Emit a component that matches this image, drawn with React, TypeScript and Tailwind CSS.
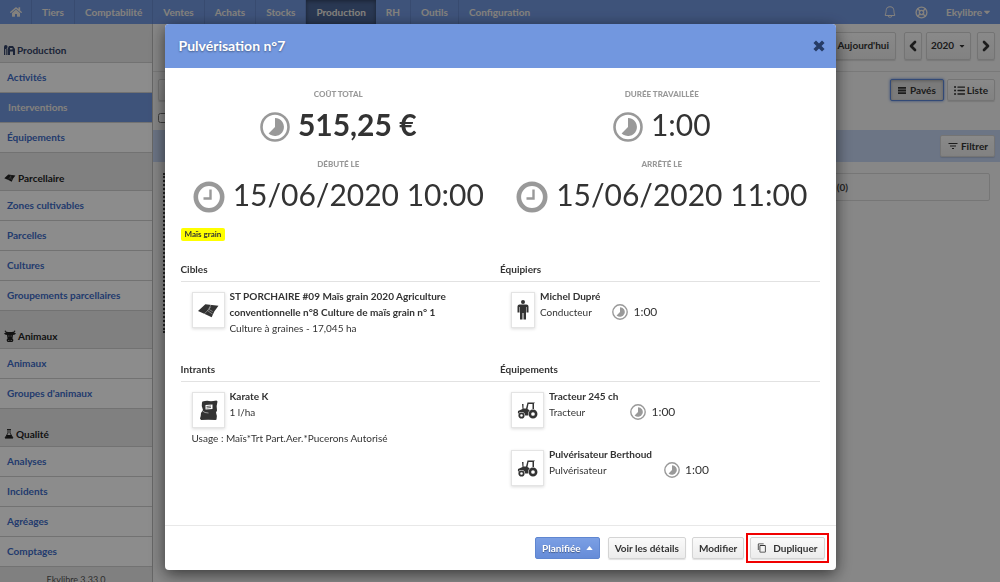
import React from 'react'
import { FaHome, FaListUl, FaCaretDown } from 'react-icons/fa'
import { MdFilterList, MdContentCopy } from 'react-icons/md'
import { PiBell } from 'react-icons/pi'
import { ChevronLeft, ChevronRight, LifeBuoy } from 'lucide-react'

const navItems = ['Tiers', 'Comptabilité', 'Ventes', 'Achats', 'Stocks', 'Production', 'RH', 'Outils', 'Configuration']

const BarnIcon = () => (
  <svg viewBox="0 0 22 20" className="h-[10px] w-[11px]" fill="currentColor" aria-hidden="true">
    <path d="M0 20V4q0-4 3.500-4T7 3v2L5.500 6.500V20H4V8H2.500v12zM7 20V8l3-6h8l4 6v12h-4v-7h-6v7zM12 6v3h5V6z" fillRule="evenodd" />
  </svg>
)

const FieldIcon = ({ className }: { className: string }) => (
  <svg viewBox="0 0 40 28" className={className} aria-hidden="true">
    <path d="M14 2l25 3-8 11-5 11-10-5L0 15z" fill="currentColor" />
    <path d="M25 2.500l-6 11-7 7M18 14l10 7M24 7l-3 5 7 4" fill="none" stroke="white" strokeOpacity=".6" strokeWidth="1.200" />
  </svg>
)

const CowIcon = () => (
  <svg viewBox="0 0 24 24" className="h-3 w-3" fill="currentColor" aria-hidden="true">
    <path d="M2 0Q0 4 4 6L0 6q1 4 6 4l1 7-2 3 2 4h10l2-4-2-3 1-7q5 0 6-4l-4 0q4-2 2-6-1 4-6 4H8Q3 4 2 0z" />
    <path d="M9 11h1.500v2H9zM13.500 11H15v2h-1.500zM8.500 20h2v1.500h-2zM13.500 20h2v1.500h-2z" fill="#e9e9e9" />
  </svg>
)

const FlaskIcon = () => (
  <svg viewBox="0 0 20 20" className="size-[10px]" aria-hidden="true">
    <path d="M6 1h8M8 1v7L2 18h16L12 8V1" fill="none" stroke="currentColor" strokeWidth="1.800" />
    <path d="M6 12h8l4 6.500H2z" fill="currentColor" />
  </svg>
)

const PersonIcon = () => (
  <svg viewBox="0 0 24 40" className="h-5 w-3" fill="currentColor" aria-hidden="true">
    <circle cx="12" cy="4" r="4" />
    <path d="M5 9h14q4 0 4 4v12h-4V14h-1v25h-5V26h-2v13H6V14H5v11H1V13q0-4 4-4z" />
  </svg>
)

const TractorIcon = () => (
  <svg viewBox="0 0 42 34" className="h-[17px] w-[21px]" aria-hidden="true">
    <path d="M10 4h3v9h5l3-12h15l-2 2v12l5 6-4 3-14 3H3q-2-4-1-9l9-4zM23 4l-2 10 5 3 5-3V4z" fill="currentColor" fillRule="evenodd" />
    <circle cx="32" cy="24" r="9.800" fill="white" />
    <circle cx="32" cy="24" r="6.300" fill="none" stroke="currentColor" strokeWidth="5.200" />
    <circle cx="9" cy="27" r="7.200" fill="white" />
    <circle cx="9" cy="27" r="4.400" fill="none" stroke="currentColor" strokeWidth="3.600" />
  </svg>
)

const BagIcon = () => (
  <svg viewBox="0 0 38 42" className="h-[21px] w-[21px]" aria-hidden="true">
    <path d="M7 3q8-2 13-1t15-1l2 2q-3 9-1 18l-2 4q3 7 1 14l-2 1q-15-1-29 0l-2-3q2-6 2-11l4-6Q4 12 6 5z" fill="currentColor" />
    <path d="M13 10l14-1v9l-14 1z" fill="white" />
    <path d="M15 13l9-1M15 16l9-1" fill="none" stroke="currentColor" strokeWidth="1.500" />
    <path d="M7 22q4 4 12 4" fill="none" stroke="white" strokeWidth="1" />
  </svg>
)

const TimelapseIcon = ({ className }: { className: string }) => (
  <svg viewBox="0 0 30 30" className={className} aria-hidden="true">
    <circle cx="15" cy="15" r="13.500" fill="none" stroke="#999" strokeWidth="2.600" />
    <path d="M15 6a9 9 0 1 1-6.400 15.400L15 15z" fill="#999" />
  </svg>
)

const ClockIcon = () => (
  <svg viewBox="0 0 32 32" className="mt-[6px] size-8 shrink-0" fill="none" stroke="#999" aria-hidden="true">
    <circle cx="16" cy="16" r="13.200" strokeWidth="4.600" />
    <path d="M17.500 8.500v9h-7" strokeWidth="2.400" />
  </svg>
)

const sections = [
  { title: 'Production', icon: <BarnIcon />, items: ['Activités', 'Interventions', 'Équipements'] },
  {
    title: 'Parcellaire',
    icon: <FieldIcon className="h-2 w-3" />,
    items: ['Zones cultivables', 'Parcelles', 'Cultures', 'Groupements parcellaires'],
  },
  { title: 'Animaux', icon: <CowIcon />, items: ['Animaux', "Groupes d'animaux"] },
  { title: 'Qualité', icon: <FlaskIcon />, items: ['Analyses', 'Incidents', 'Agréages', 'Comptages'] },
]

const buttonBase =
  'flex items-center justify-center rounded-xs border border-[#d4d4d4] bg-linear-to-b from-[#fafafa] to-[#ececec] font-bold text-[#333] shadow-[0_1px_1px_rgba(0,0,0,0.12)]'

function TopNav() {
  return (
    <header className="flex h-6 bg-[#7297df] text-[10px] font-bold text-[#f0ece4]">
      <nav className="flex">
        <a href="#" aria-label="Accueil" className="flex w-8 items-center justify-center border-r border-[#6689cd]">
          <FaHome className="size-3" />
        </a>
        {navItems.map(item => (
          <a
            key={item}
            href="#"
            className={
              item === 'Production'
                ? 'flex items-center bg-[#4c6697] px-[10px] shadow-[inset_0_1px_4px_rgba(0,0,0,0.4)]'
                : 'flex items-center border-r border-[#6689cd] px-[10px] last:border-r-0'
            }
          >
            {item}
          </a>
        ))}
      </nav>
      <div className="ml-auto flex items-center pr-2">
        <button aria-label="Notifications" className="mr-[18px]">
          <PiBell className="size-[14px]" />
        </button>
        <button aria-label="Aide" className="mr-[18px]">
          <LifeBuoy className="size-[13px]" strokeWidth={2.5} />
        </button>
        <button className="flex items-center">
          Ekylibre
          <FaCaretDown className="size-[10px]" />
        </button>
      </div>
    </header>
  )
}

function Sidebar() {
  return (
    <aside className="w-[153px] shrink-0 border-r border-[#bbb] bg-[#e9e9e9] text-[10px] font-bold">
      {sections.map(section => (
        <section key={section.title} className="border-t border-[#d0d0d0] first:border-t-0">
          <h2
            className={
              section.title === 'Production'
                ? 'flex h-[39px] items-end gap-[2px] border-b border-[#d0d0d0] pb-1 pl-1 leading-4 text-[#334266]'
                : 'flex h-[38px] items-end gap-[2px] border-b border-[#d0d0d0] pb-1 pl-1 leading-4 text-[#222]'
            }
          >
            <span className="flex h-4 items-center">{section.icon}</span>
            {section.title}
          </h2>
          <ul>
            {section.items.map(item => (
              <li key={item} className="border-b border-[#d0d0d0] last:border-b-0">
                <a
                  href="#"
                  className={
                    item === 'Interventions'
                      ? 'flex h-[29px] items-center bg-[#7297df] pl-2 text-[#f0ece4]'
                      : 'flex h-[29px] items-center bg-white pl-[7px] text-[#3e6cc8]'
                  }
                >
                  {item}
                </a>
              </li>
            ))}
          </ul>
        </section>
      ))}
      <footer className="border-t border-[#d0d0d0] pt-[6px] text-center text-[9px] font-normal text-[#555]">Ekylibre 3.33.0</footer>
    </aside>
  )
}

function MainPage() {
  return (
    <main className="min-w-0 flex-1 bg-[#f6f6f6] text-[10px]">
      <div className="flex h-12 items-center justify-end border-b border-[#ddd] pr-[5px] pb-1">
        <button className={`${buttonBase} mr-2 h-7 px-[6px]`}>Aujourd'hui</button>
        <button aria-label="Précédent" className={`${buttonBase} mr-1 h-7 w-[18px]`}>
          <ChevronLeft className="size-4 shrink-0" strokeWidth={4} />
        </button>
        <button className={`${buttonBase} mr-[6px] h-7 w-[45px] gap-1`}>
          2020
          <FaCaretDown className="size-2" />
        </button>
        <button aria-label="Suivant" className={`${buttonBase} h-7 w-[18px]`}>
          <ChevronRight className="size-4 shrink-0" strokeWidth={4} />
        </button>
      </div>

      <div className="flex justify-between pt-[7px] pr-[5px] pl-[5px]">
        <div>
          <button aria-label="Actions" className={`${buttonBase} h-[22px] w-16`} />
          <input type="checkbox" aria-label="Tout sélectionner" className="mt-3 block size-[10px]" />
        </div>
        <div className="flex gap-[3px]">
          <button className="flex h-[22px] items-center gap-1 rounded-xs border border-[#5b86d8] bg-[#dedede] px-[7px] font-bold text-[#333] shadow-[0_0_3px_#5b86d8,inset_0_1px_3px_rgba(0,0,0,0.25)]">
            <svg viewBox="0 0 8 7" className="h-[7px] w-2" fill="currentColor" aria-hidden="true">
              <path d="M0 0h8v1.800H0zM0 2.600h8v1.800H0zM0 5.200h8V7H0z" />
            </svg>
            Pavés
          </button>
          <button className={`${buttonBase} h-[22px] gap-[2px] px-[6px]`}>
            <FaListUl className="size-[11px]" />
            Liste
          </button>
        </div>
      </div>

      <div className="mt-[7px] flex h-8 items-center justify-end bg-[#c5d5f3] pr-[5px]">
        <button className={`${buttonBase} h-[22px] gap-[2px] px-[6px]`}>
          <MdFilterList className="size-3" />
          Filtrer
        </button>
      </div>

      <div className="flex gap-3 px-[10px] pt-[11px]">
        <div className="h-40 flex-1 border-2 border-dotted border-[#444]" />
        <h3 className="flex h-7 flex-1 items-center justify-end rounded-xs border border-[#d8d8d8] pr-[141px] font-bold text-[#444]">(0)</h3>
      </div>
    </main>
  )
}

type StatProps = { label: string; icon: React.ReactNode; children: React.ReactNode; bold?: boolean }

function Stat({ label, icon, children, bold }: StatProps) {
  return (
    <div className="flex flex-col items-center">
      <h3 className="text-[8px] leading-3 font-black text-[#999] uppercase">{label}</h3>
      <p className="mt-1 flex items-center gap-2 text-[30px] leading-10 whitespace-nowrap">
        {icon}
        <span className={bold ? 'font-bold' : ''}>{children}</span>
      </p>
    </div>
  )
}

type ItemProps = { icon: React.ReactNode; name: string; detail: string; time?: string }

function Item({ icon, name, detail, time }: ItemProps) {
  return (
    <div className="flex gap-[5px] pl-[11px]">
      <div className="mt-1 flex h-9 shrink-0 items-center self-start border border-[#e4e4e4] px-[5px] shadow-[0_1px_3px_rgba(0,0,0,0.15)]">{icon}</div>
      <div>
        <h4 className="font-bold">{name}</h4>
        <p>{detail}</p>
      </div>
      {time && (
        <p className="mt-4 ml-[7px] flex items-center gap-[5px] self-start text-xs leading-4">
          <TimelapseIcon className="size-4" />
          {time}
        </p>
      )}
    </div>
  )
}

const SectionTitle = ({ children }: { children: React.ReactNode }) => (
  <h3 className="border-b border-[#e2e2e2] pb-1 font-bold">{children}</h3>
)

function InterventionDialog() {
  return (
    <div
      role="dialog"
      aria-labelledby="dialog-title"
      className="w-full max-w-[671px] self-start overflow-hidden rounded-sm bg-white text-[#333] shadow-[0_4px_16px_rgba(0,0,0,0.6)]"
    >
      <div className="flex h-11 items-center justify-between bg-[#7297df] pr-[11px] pl-[14px]">
        <h2 id="dialog-title" className="text-sm font-bold text-white [text-shadow:0_1px_2px_rgba(0,0,0,0.4)]">
          Pulvérisation n°7
        </h2>
        <button aria-label="Fermer" className="text-[#263c66]">
          <svg viewBox="0 0 12 12" className="size-3" fill="none" stroke="currentColor" strokeWidth="3.600" strokeLinecap="square">
            <path d="M3 3l6 6M9 3l-6 6" />
          </svg>
        </button>
      </div>

      <div className="grid grid-cols-2 gap-y-[14px] px-3 pt-5">
        <Stat label="Coût total" icon={<TimelapseIcon className="mt-[6px] size-[30px]" />} bold>
          515,25 €
        </Stat>
        <Stat label="Durée travaillée" icon={<TimelapseIcon className="mt-[6px] size-[30px]" />}>
          1:00
        </Stat>
        <Stat label="Débuté le" icon={<ClockIcon />}>
          15/06/2020 10:00
        </Stat>
        <Stat label="Arrêté le" icon={<ClockIcon />}>
          15/06/2020 11:00
        </Stat>
      </div>

      <div className="px-4 pt-[14px] text-[10px] leading-4">
        <span className="block w-fit rounded-xs bg-[#ff0] px-1 text-[8px] leading-[13px] font-bold">Maïs grain</span>

        <div className="mt-5 grid grid-cols-2">
          <section className="h-[100px]">
            <SectionTitle>Cibles</SectionTitle>
            <div className="max-w-[280px] pt-[6px]">
              <Item
                icon={<FieldIcon className="h-[15px] w-[21px]" />}
                name="ST PORCHAIRE #09 Maïs grain 2020 Agriculture conventionnelle n°8 Culture de maïs grain n° 1"
                detail="Culture à graines - 17,045 ha"
              />
            </div>
          </section>
          <section>
            <SectionTitle>Équipiers</SectionTitle>
            <div className="pt-[6px]">
              <Item icon={<PersonIcon />} name="Michel Dupré" detail="Conducteur" time="1:00" />
            </div>
          </section>
          <section>
            <SectionTitle>Intrants</SectionTitle>
            <div className="pt-[6px]">
              <Item icon={<BagIcon />} name="Karate K" detail="1 l/ha" />
              <p className="mt-[2px] pl-[11px]">Usage : Maïs*Trt Part.Aer.*Pucerons Autorisé</p>
            </div>
          </section>
          <section>
            <SectionTitle>Équipements</SectionTitle>
            <div className="flex flex-col gap-[18px] pt-[6px]">
              <Item icon={<TractorIcon />} name="Tracteur 245 ch" detail="Tracteur" time="1:00" />
              <Item icon={<TractorIcon />} name="Pulvérisateur Berthoud" detail="Pulvérisateur" time="1:00" />
            </div>
          </section>
        </div>
      </div>

      <div className="mt-[39px] flex justify-end gap-[6px] border-t border-[#e8e8e8] py-[11px] pr-[11px] text-[10px]">
        <button className="mr-[2px] flex h-[22px] items-center gap-[5px] rounded-xs border border-[#5f86d0] bg-linear-to-b from-[#7b9fe4] to-[#668cd8] px-[6px] font-bold text-white [text-shadow:0_1px_1px_rgba(0,0,0,0.4)]">
          Planifiée
          <svg viewBox="0 0 8 5" className="h-1 w-[7px]" fill="currentColor" aria-hidden="true">
            <path d="M0 5l4-5 4 5z" />
          </svg>
        </button>
        <button className={`${buttonBase} h-[22px] px-[6px]`}>Voir les détails</button>
        <button className={`${buttonBase} h-[22px] px-[6px]`}>Modifier</button>
        <div className="-m-1 border-2 border-[#f00000] p-[2px]">
          <button className={`${buttonBase} h-[22px] gap-[6px] px-[6px]`}>
            <MdContentCopy className="size-[10px]" />
            Dupliquer
          </button>
        </div>
      </div>
    </div>
  )
}

function App() {
  return (
    <div className="flex h-screen flex-col overflow-hidden font-[Lato,sans-serif]">
      <TopNav />
      <div className="flex min-h-0 flex-1">
        <Sidebar />
        <MainPage />
      </div>
      {/* Dimmed backdrop with the intervention details */}
      <div className="fixed inset-0 flex justify-center overflow-y-auto bg-black/45 pt-6">
        <InterventionDialog />
      </div>
    </div>
  )
}

export default App
